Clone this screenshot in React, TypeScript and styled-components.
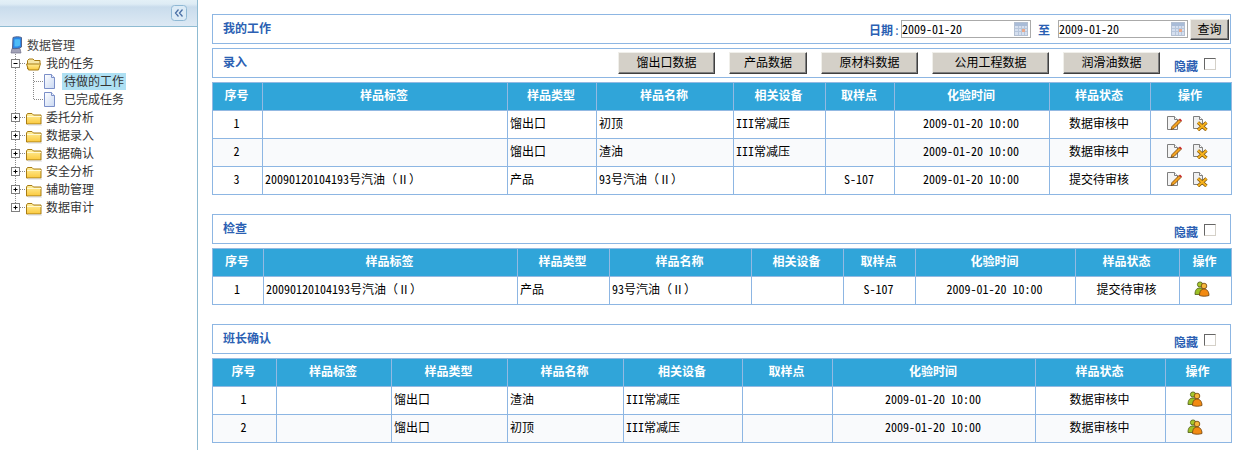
import React from "react";
import styled, { createGlobalStyle } from "styled-components";

const GlobalStyle = createGlobalStyle`
  html, body { margin: 0; padding: 0; background: #fff; overflow: hidden; }
  body { font-family: "Noto Sans CJK SC", "Liberation Sans", sans-serif; font-size: 12px; color: #000; }
`;

const Page = styled.div`
  display: flex;
  width: 1260px;
  height: 450px;
`;

/* ---------- left tree ---------- */
const Sidebar = styled.aside`
  width: 197px;
  flex: none;
  border-right: 1px solid #8fbbd2;
`;
const SideHead = styled.div`
  height: 26px;
  border-bottom: 1px solid #8fbbd2;
  display: flex;
  align-items: center;
  justify-content: flex-end;
  padding: 0 10px 0 0;
  background: linear-gradient(#e3f0f7 0, #deecf5 4px, #c9dcec 7px, #dde9f4 26px);
`;
const Tree = styled.div`
  padding: 9px 0 0 7px;
`;
const TreeRow = styled.div`
  display: flex;
  align-items: center;
  height: 18px;
  color: #333;
`;
const TreeLabel = styled.span<{ $on?: boolean }>`
  margin-left: 1px;
  padding: 0 2px;
  height: 17px;
  line-height: 15px;
  background: ${(p) => (p.$on ? "#aee0f3" : "transparent")};
  white-space: nowrap;
`;
const RootLabel = styled.span`
  margin-left: 2px;
  height: 17px;
  line-height: 15px;
  color: #444;
`;

type JointKind = "plus" | "minus" | "plusLast" | "line" | "corner" | "tee" | "blank";

const Joint = ({ kind }: { kind: JointKind }) => {
  const dot = { stroke: "#888", strokeWidth: 1, strokeDasharray: "1 1", fill: "none" };
  const box = kind === "plus" || kind === "minus" || kind === "plusLast";
  return (
    <svg width="18" height="18" viewBox="0 0 18 18" style={{ flex: "none" }}>
      {kind === "line" && <path d="M8.5 0V18" {...dot} />}
      {(kind === "plus" || kind === "minus") && <path d="M8.5 0V18M13 9.5H18" {...dot} />}
      {kind === "plusLast" && <path d="M8.5 0V9M13 9.5H18" {...dot} />}
      {kind === "tee" && <path d="M8.5 0V18M9 9.5H18" {...dot} />}
      {kind === "corner" && <path d="M8.5 0V9.5H18" {...dot} />}
      {box && (
        <>
          <rect x="4.5" y="5.5" width="8" height="8" fill="#fff" stroke="#808080" />
          <path d="M6.5 9.5h4" stroke="#000" />
          {kind !== "minus" && <path d="M8.5 7.5v4" stroke="#000" />}
        </>
      )}
    </svg>
  );
};

const FolderIcon = ({ open }: { open?: boolean }) => (
  <svg width="18" height="18" viewBox="0 0 18 18" style={{ flex: "none" }}>
    <defs>
      <linearGradient id="fold" x1="0" y1="0" x2="0" y2="1">
        <stop offset="0" stopColor="#fff0a0" />
        <stop offset="1" stopColor="#fbc93c" />
      </linearGradient>
    </defs>
    {open ? (
      <>
        <path d="M2.5 15V6.5L4 5h4l1.5 1.5H15V9" fill="#f6e6a6" stroke="#a87c14" />
        <path d="M1.5 10h12.5l1.5-.5-2 6.5H3.5z" fill="url(#fold)" stroke="#a87c14" />
      </>
    ) : (
      <>
        <path d="M1.5 7l1-1.5h4.5l1.5 1.5h7.5v9h-14.5z" fill="url(#fold)" stroke="#a87c14" />
        <path d="M2 8.500h14" stroke="#fff8d0" />
        <path d="M3 17h14" stroke="#d9d9d9" />
      </>
    )}
  </svg>
);

const PageIcon = () => (
  <svg width="18" height="18" viewBox="0 0 18 18" style={{ flex: "none" }}>
    <defs>
      <linearGradient id="pg" x1="0" y1="0" x2="1" y2="1">
        <stop offset="0" stopColor="#ffffff" />
        <stop offset="1" stopColor="#c9d8f2" />
      </linearGradient>
    </defs>
    <path d="M1.5 2.5h7l3 3v11h-10z" fill="url(#pg)" stroke="#7b8fc8" />
    <path d="M8.5 2.5v3h3" fill="#e8eefb" stroke="#7b8fc8" />
  </svg>
);

const RootIcon = () => (
  <svg width="18" height="18" viewBox="0 0 18 18" style={{ flex: "none" }}>
    <path d="M5 12.500h8l1 4.500H4z" fill="#a3a3b8" stroke="#6f6f88" strokeWidth=".7" />
    <path d="M6 1.500c3-1 6-1 8.500 0V11c-2.500 1.500-6 2-9 1.500z" fill="#2b86e6" stroke="#55648c" />
    <path d="M7.500 3.500c2-.5 4-.5 5.500 0v6c-1.500 1-3.500 1-5.500 1z" fill="#4dbcf7" />
  </svg>
);

const CollapseIcon = () => (
  <svg width="16" height="16" viewBox="0 0 16 16">
    <rect x=".5" y=".5" width="15" height="15" rx="3" fill="#dcebf6" stroke="#8fb8d4" />
    <path d="M7.5 4.500L4.500 8l3 3.500M11.500 4.500L8.500 8l3 3.500" fill="none" stroke="#4a6fa5" strokeWidth="1.3" />
  </svg>
);

/* ---------- main area ---------- */
const Main = styled.main`
  width: 1019px;
  margin-left: 14px;
  padding-top: 14px;
  flex: none;
`;
const Section = styled.section`
  margin-bottom: 19px;
`;
const BarBox = styled.div`
  height: 28px;
  border: 1px solid #8db6e3;
  margin-bottom: 4px;
  display: flex;
  align-items: center;
  padding: 0 1px 0 10px;
`;
const Title = styled.h2`
  margin: 0;
  font-size: 12px;
  font-weight: 700;
  color: #2b5fb3;
  line-height: 16px;
  position: relative;
  top: -1px;
`;
const Tools = styled.div`
  margin-left: auto;
  display: flex;
  align-items: center;
`;
const DateCaption = styled.span`
  color: #2b5fb3;
  font-weight: 700;
`;
const Colon = styled.span`
  display: inline-block;
  width: 8px;
  text-align: center;
  font-weight: 400;
`;
const ToCaption = styled.span`
  color: #2b5fb3;
  font-weight: 700;
  margin: 0 8px 0 7px;
`;
const DateField = styled.div`
  width: 128px;
  height: 16px;
  border: 1px solid #aaa;
  display: flex;
  align-items: center;
  justify-content: space-between;
  background: #fff;
  line-height: 16px;
  svg { margin-right: 2px; }
`;
const Latin = styled.span`
  font-family: "Noto Sans Mono CJK SC", "DejaVu Sans Mono", monospace;
  font-size: 12px;
`;
const QueryBtn = styled.button`
  width: 39px;
  height: 21px;
  margin-left: 2px;
  padding: 0 0 3px;
  font: inherit;
  background: #d4d0c8;
  border: 1px solid;
  border-color: #f0efea #404040 #404040 #f0efea;
  box-shadow: inset -1px -1px 0 #808080;
  color: #000;
`;
const BtnRow = styled.div`
  margin-left: auto;
  display: flex;
  gap: 14px;
  margin-right: 14px;
`;
const DataBtn = styled.button<{ $w: number }>`
  width: ${(p) => p.$w}px;
  height: 22px;
  padding: 0 0 3px;
  font: inherit;
  color: #000;
  background: #d4d0c8;
  border: 1px solid;
  border-color: #f0efea #404040 #404040 #f0efea;
  box-shadow: inset -1px -1px 0 #808080;
`;
const Hide = styled.label`
  display: flex;
  align-items: center;
  gap: 6px;
  margin-right: 13px;
  margin-top: 5px;
  color: #2b5fb3;
  font-weight: 700;
`;
const HideBox = styled.input`
  appearance: none;
  margin: -4px 0 0;
  width: 12px;
  height: 12px;
  background: #fff;
  border: 1px solid;
  border-color: #666 #d4d0c8 #d4d0c8 #666;
`;
const Grid = styled.table`
  width: 1019px;
  table-layout: fixed;
  border-collapse: collapse;
  font-size: 12px;
`;
const Col = styled.col<{ $w: number }>`
  width: ${(p) => p.$w}px;
`;
const Th = styled.th`
  height: 23px;
  padding: 0 2px 4px 0;
  background: #30a5d9;
  color: #fff;
  font-weight: 700;
  text-align: center;
  border: 1px solid #93b9e2;
`;
const Td = styled.td<{ $left?: boolean }>`
  height: 23px;
  padding: ${(p) => (p.$left ? "0 0 4px 2px" : "0 2px 4px 0")};
  text-align: ${(p) => (p.$left ? "left" : "center")};
  border: 1px solid #8db6e3;
  white-space: nowrap;
  overflow: hidden;
`;
const Tr = styled.tr<{ $alt?: boolean }>`
  background: ${(p) => (p.$alt ? "#f9fafc" : "#fff")};
`;
const Actions = styled.div`
  display: flex;
  justify-content: center;
  gap: 10px;
  padding-right: 6px;
`;

const Mixed = ({ text }: { text: string }) => (
  <>
    {text.split(/([\x20-\x7e]+)/).map((part, i) =>
      /^[\x20-\x7e]+$/.test(part) ? <Latin key={i}>{part}</Latin> : part
    )}
  </>
);

const Calendar = () => (
  <svg width="14" height="14" viewBox="0 0 14 14">
    <rect x=".5" y=".5" width="13" height="13" fill="#d5dfef" stroke="#b4c0d2" />
    <rect x="1" y="1" width="12" height="3" fill="#a9bcd8" />
    <path d="M1 6.500h12M1 9.500h12M4.500 4v9M7.500 4v9M10.500 4v9" stroke="#b7c6dc" />
    <rect x="8" y="7" width="3" height="3" fill="#eaa98a" />
  </svg>
);

const EditIcon = () => (
  <svg width="16" height="16" viewBox="0 0 16 16">
    <path d="M1.500 1.500h7l3 3v10h-10z" fill="#f5f5f5" stroke="#7f7f7f" />
    <path d="M8.500 1.500v3h3" fill="#fff" stroke="#7f7f7f" />
    <path d="M6 11.500l7-7 2 2-7 7-3 1z" fill="#f4a21f" stroke="#6e4009" strokeWidth=".8" />
    <path d="M13 4.500l1-1 2 2-1 1z" fill="#c81e1e" />
  </svg>
);

const DeleteIcon = () => (
  <svg width="16" height="16" viewBox="0 0 16 16">
    <path d="M1.500 1.500h6l3 3v9h-9z" fill="#f0f0f0" stroke="#7f7f7f" />
    <path d="M7.500 1.500v3h3" fill="#fff" stroke="#7f7f7f" />
    <path d="M6 7.500l8.500 7.500M14.500 7.500L6 15" stroke="#7a5210" strokeWidth="3.4" />
    <path d="M6 7.500l8.500 7.500M14.500 7.500L6 15" stroke="#f6b21c" strokeWidth="2" />
  </svg>
);

const GroupIcon = () => (
  <svg width="16" height="16" viewBox="0 0 16 16">
    <circle cx="6" cy="3.500" r="2.600" fill="#a8c82c" stroke="#4d5a14" strokeWidth=".8" />
    <path d="M1 13.500c0-5 2-6.500 5-6.500s4 2 4 6.500z" fill="#9cc026" stroke="#4d5a14" strokeWidth=".8" />
    <circle cx="10" cy="5" r="2.800" fill="#f6b73c" stroke="#6e4009" strokeWidth=".8" />
    <path d="M5.500 14.500c0-4 1.500-6.500 4.500-6.500s5 2.500 5 6.500c-3 1-6.500 1-9.500 0z" fill="#f28a12" stroke="#6e4009" strokeWidth=".8" />
  </svg>
);

const heads = ["序号", "样品标签", "样品类型", "样品名称", "相关设备", "取样点", "化验时间", "样品状态", "操作"];
const stamp = "2009-01-20 10:00";

type Row = [string, string, string, string, string, string, string];

const rows1: Row[] = [
  ["1", "", "馏出口", "初顶", "III常减压", "", "数据审核中"],
  ["2", "", "馏出口", "渣油", "III常减压", "", "数据审核中"],
  ["3", "20090120104193号汽油（Ⅱ）", "产品", "93号汽油（Ⅱ）", "", "S-107", "提交待审核"],
];
const rows2: Row[] = [["1", "20090120104193号汽油（Ⅱ）", "产品", "93号汽油（Ⅱ）", "", "S-107", "提交待审核"]];
const rows3: Row[] = [
  ["1", "", "馏出口", "渣油", "III常减压", "", "数据审核中"],
  ["2", "", "馏出口", "初顶", "III常减压", "", "数据审核中"],
];

const DataTable = ({ cols, rows, edit }: { cols: number[]; rows: Row[]; edit?: boolean }) => (
  <Grid>
    <colgroup>
      {cols.map((w, i) => (
        <Col key={i} $w={w} />
      ))}
    </colgroup>
    <thead>
      <tr>
        {heads.map((h) => (
          <Th key={h}>{h}</Th>
        ))}
      </tr>
    </thead>
    <tbody>
      {rows.map((r, i) => (
        <Tr key={r[0]} $alt={i % 2 === 1}>
          <Td><Latin>{r[0]}</Latin></Td>
          <Td $left><Mixed text={r[1]} /></Td>
          <Td $left><Mixed text={r[2]} /></Td>
          <Td $left><Mixed text={r[3]} /></Td>
          <Td $left><Mixed text={r[4]} /></Td>
          <Td><Latin>{r[5]}</Latin></Td>
          <Td><Latin>{stamp}</Latin></Td>
          <Td>{r[6]}</Td>
          <Td>
            <Actions>
              {edit ? (
                <>
                  <EditIcon />
                  <DeleteIcon />
                </>
              ) : (
                <GroupIcon />
              )}
            </Actions>
          </Td>
        </Tr>
      ))}
    </tbody>
  </Grid>
);

const HideToggle = () => (
  <Hide>
    隐藏
    <HideBox type="checkbox" />
  </Hide>
);

const folders = ["委托分析", "数据录入", "数据确认", "安全分析", "辅助管理", "数据审计"];
const dataBtns: [string, number][] = [
  ["馏出口数据", 97],
  ["产品数据", 78],
  ["原材料数据", 97],
  ["公用工程数据", 117],
  ["润滑油数据", 97],
];

const App: React.FC = () => (
  <Page>
    <GlobalStyle />
    <Sidebar>
      <SideHead>
        <CollapseIcon />
      </SideHead>
      <Tree>
        <TreeRow>
          <RootIcon />
          <RootLabel>数据管理</RootLabel>
        </TreeRow>
        <TreeRow>
          <Joint kind="minus" />
          <FolderIcon open />
          <TreeLabel>我的任务</TreeLabel>
        </TreeRow>
        <TreeRow>
          <Joint kind="line" />
          <Joint kind="tee" />
          <PageIcon />
          <TreeLabel $on>待做的工作</TreeLabel>
        </TreeRow>
        <TreeRow>
          <Joint kind="line" />
          <Joint kind="corner" />
          <PageIcon />
          <TreeLabel>已完成任务</TreeLabel>
        </TreeRow>
        {folders.map((f, i) => (
          <TreeRow key={f}>
            <Joint kind={i === folders.length - 1 ? "plusLast" : "plus"} />
            <FolderIcon />
            <TreeLabel>{f}</TreeLabel>
          </TreeRow>
        ))}
      </Tree>
    </Sidebar>
    <Main>
      <Section>
        <BarBox>
          <Title>我的工作</Title>
          <Tools>
            <DateCaption>
              日期<Colon>:</Colon>
            </DateCaption>
            <DateField>
              <Latin>2009-01-20</Latin>
              <Calendar />
            </DateField>
            <ToCaption>至</ToCaption>
            <DateField>
              <Latin>2009-01-20</Latin>
              <Calendar />
            </DateField>
            <QueryBtn>查询</QueryBtn>
          </Tools>
        </BarBox>
        <BarBox>
          <Title>录入</Title>
          <BtnRow>
            {dataBtns.map(([label, w]) => (
              <DataBtn key={label} $w={w}>
                {label}
              </DataBtn>
            ))}
          </BtnRow>
          <HideToggle />
        </BarBox>
        <DataTable cols={[50, 245, 89, 137, 92, 69, 155, 101, 81]} rows={rows1} edit />
      </Section>
      <Section>
        <BarBox>
          <Title>检查</Title>
          <Tools>
            <HideToggle />
          </Tools>
        </BarBox>
        <DataTable cols={[51, 254, 92, 142, 92, 72, 160, 104, 52]} rows={rows2} />
      </Section>
      <Section>
        <BarBox>
          <Title>班长确认</Title>
          <Tools>
            <HideToggle />
          </Tools>
        </BarBox>
        <DataTable cols={[64, 115, 116, 116, 119, 90, 203, 130, 66]} rows={rows3} />
      </Section>
    </Main>
  </Page>
);

export default App;
